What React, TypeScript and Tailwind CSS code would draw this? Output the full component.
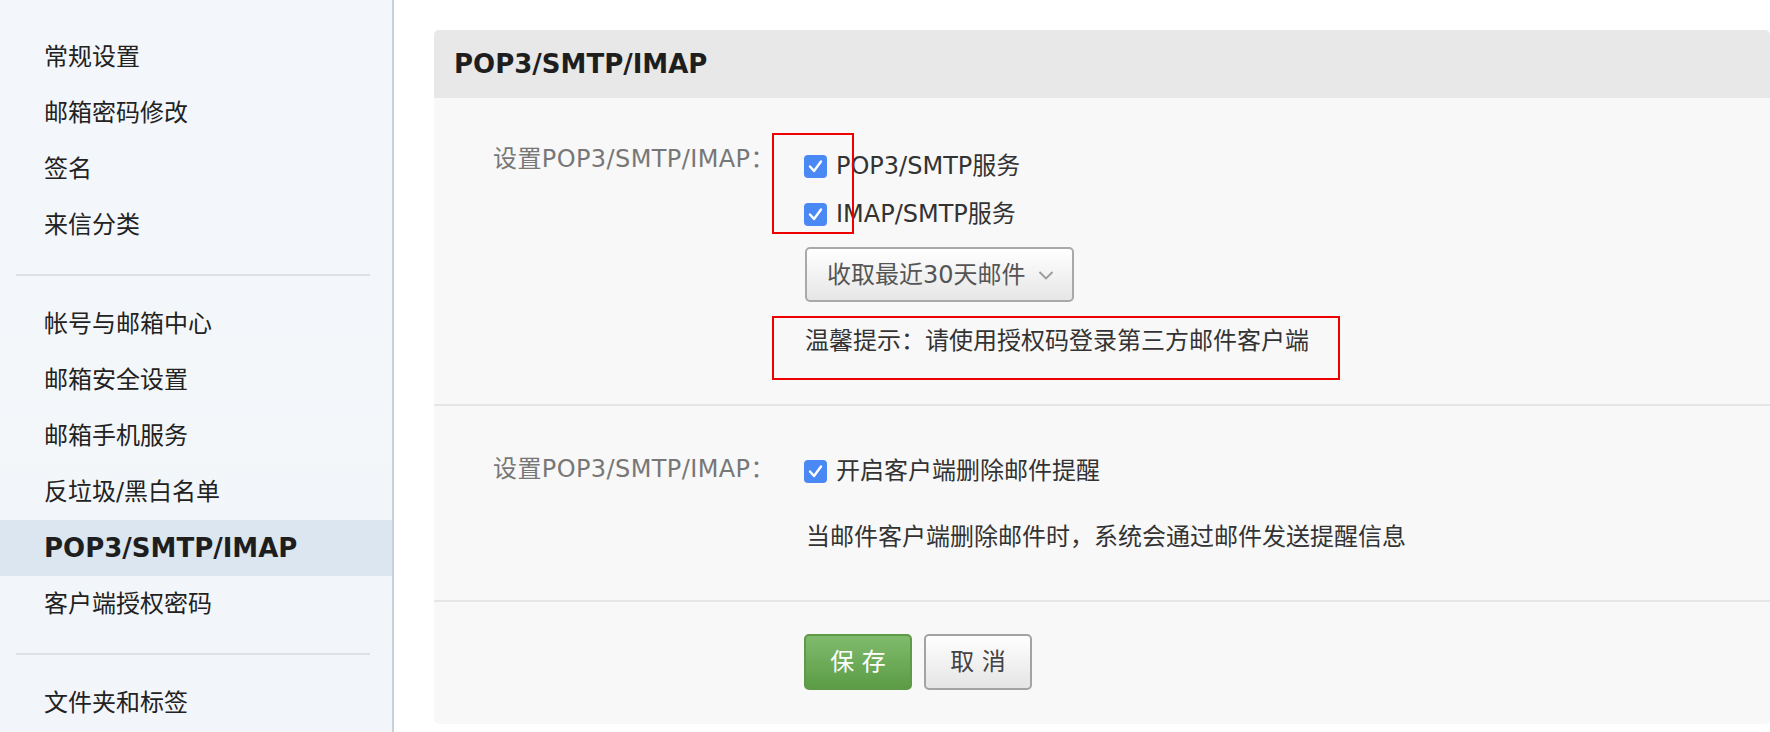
import React from "react";

const FONT = "font-['DejaVu_Sans','Noto_Sans_CJK_SC',sans-serif]";

function Check() {
  return (
    <span className="flex h-[23px] w-[23px] shrink-0 items-center justify-center rounded-[4px] bg-[#4a89f3]">
      <svg width="23" height="23" viewBox="0 0 23 23">
        <polyline points="6,11.5 10,16 17,6.5" fill="none" stroke="#fff" strokeWidth="2.4" strokeLinecap="round" strokeLinejoin="round" />
      </svg>
    </span>
  );
}

function SideItem({ label, active }: { label: string; active?: boolean }) {
  return (
    <div
      className={
        active
          ? "flex h-[56px] items-center bg-[#dbe6f0] pl-[44px] text-[26px] font-bold text-[#1e1e1e]"
          : "flex h-[56px] items-center pl-[44px] text-[24px] text-[#222]"
      }
    >
      {label}
    </div>
  );
}

function Divider() {
  return <div className="mx-[16px] mb-[20px] mt-[21px] h-[2px] w-[354px] bg-[#dde1e5]" />;
}

export default function App() {
  return (
    <div className={`flex h-[732px] w-full overflow-hidden bg-white ${FONT}`}>
      <aside className="h-full w-[394px] shrink-0 border-r-2 border-[#c6d1dc] bg-gradient-to-b from-[#f3f6fa] via-[#f4f7fa] to-[#f2f5f9] pt-[29px]">
        <SideItem label="常规设置" />
        <SideItem label="邮箱密码修改" />
        <SideItem label="签名" />
        <SideItem label="来信分类" />
        <Divider />
        <SideItem label="帐号与邮箱中心" />
        <SideItem label="邮箱安全设置" />
        <SideItem label="邮箱手机服务" />
        <SideItem label="反垃圾/黑白名单" />
        <SideItem label="POP3/SMTP/IMAP" active />
        <SideItem label="客户端授权密码" />
        <Divider />
        <SideItem label="文件夹和标签" />
      </aside>

      <main className="flex-1 pl-[40px] pt-[30px]">
        <div className="relative h-[694px] rounded-[5px] bg-[#f8f8f8]">
          <div className="flex h-[68px] items-center rounded-t-[5px] bg-[#e8e8e8] pl-[20px] text-[26px] font-bold text-[#1e1e1e]">
            POP3/SMTP/IMAP
          </div>

          {/* Section 1 */}
          <div className="flex h-[306px] pt-[44px]">
            <div className="w-[370px] shrink-0 pl-[59px] text-[24px] leading-[34px] tracking-[0.4px] text-[#777]">
              设置POP3/SMTP/IMAP：
            </div>
            <div className="flex flex-col">
              <div className="flex h-[48px] items-center gap-[9px] text-[24px] text-[#333]">
                <Check />
                <span>POP3/SMTP服务</span>
              </div>
              <div className="flex h-[48px] items-center gap-[9px] text-[24px] text-[#333]">
                <Check />
                <span>IMAP/SMTP服务</span>
              </div>
              <div className="ml-[1px] mt-[9px] flex h-[55px] w-[269px] items-center justify-between rounded-[5px] border-2 border-[#a9a9a9] bg-gradient-to-b from-white to-[#e6e6e6] pl-[20px] pr-[18px] text-[24px] text-[#555]">
                <span>收取最近30天邮件</span>
                <svg width="16" height="10" viewBox="0 0 16 10">
                  <polyline points="1.5,2 8,8.5 14.5,2" fill="none" stroke="#9a9a9a" strokeWidth="1.8" />
                </svg>
              </div>
              <div className="ml-[1px] mt-[21px] text-[24px] leading-[36px] text-[#333]">
                温馨提示：请使用授权码登录第三方邮件客户端
              </div>
            </div>
          </div>

          <div className="h-[2px] w-full bg-[#e6e6e6]" />

          {/* Section 2 */}
          <div className="flex h-[194px] pt-[41px]">
            <div className="w-[370px] shrink-0 pl-[59px] pt-[5px] text-[24px] leading-[34px] tracking-[0.4px] text-[#777]">
              设置POP3/SMTP/IMAP：
            </div>
            <div className="flex flex-col">
              <div className="flex h-[48px] items-center gap-[9px] text-[24px] text-[#333]">
                <Check />
                <span>开启客户端删除邮件提醒</span>
              </div>
              <div className="ml-[2px] mt-[24px] text-[24px] leading-[36px] text-[#333]">
                当邮件客户端删除邮件时，系统会通过邮件发送提醒信息
              </div>
            </div>
          </div>

          <div className="h-[2px] w-full bg-[#e6e6e6]" />

          {/* Buttons */}
          <div className="flex gap-[12px] pl-[370px] pt-[32px]">
            <button className="flex h-[56px] w-[108px] items-center justify-center rounded-[5px] border-2 border-[#5f9a47] bg-gradient-to-b from-[#80bb6d] to-[#5c9c45] text-[24px] text-white">
              保 存
            </button>
            <button className="flex h-[56px] w-[108px] items-center justify-center rounded-[5px] border-2 border-[#a3a3a3] bg-gradient-to-b from-white to-[#e5e5e5] text-[24px] text-[#444]">
              取 消
            </button>
          </div>

          {/* annotation boxes */}
          <div className="pointer-events-none absolute left-[338px] top-[103px] h-[101px] w-[82px] border-2 border-[#ee0000]" />
          <div className="pointer-events-none absolute left-[338px] top-[286px] h-[64px] w-[568px] border-2 border-[#ee0000]" />
        </div>
      </main>
    </div>
  );
}
